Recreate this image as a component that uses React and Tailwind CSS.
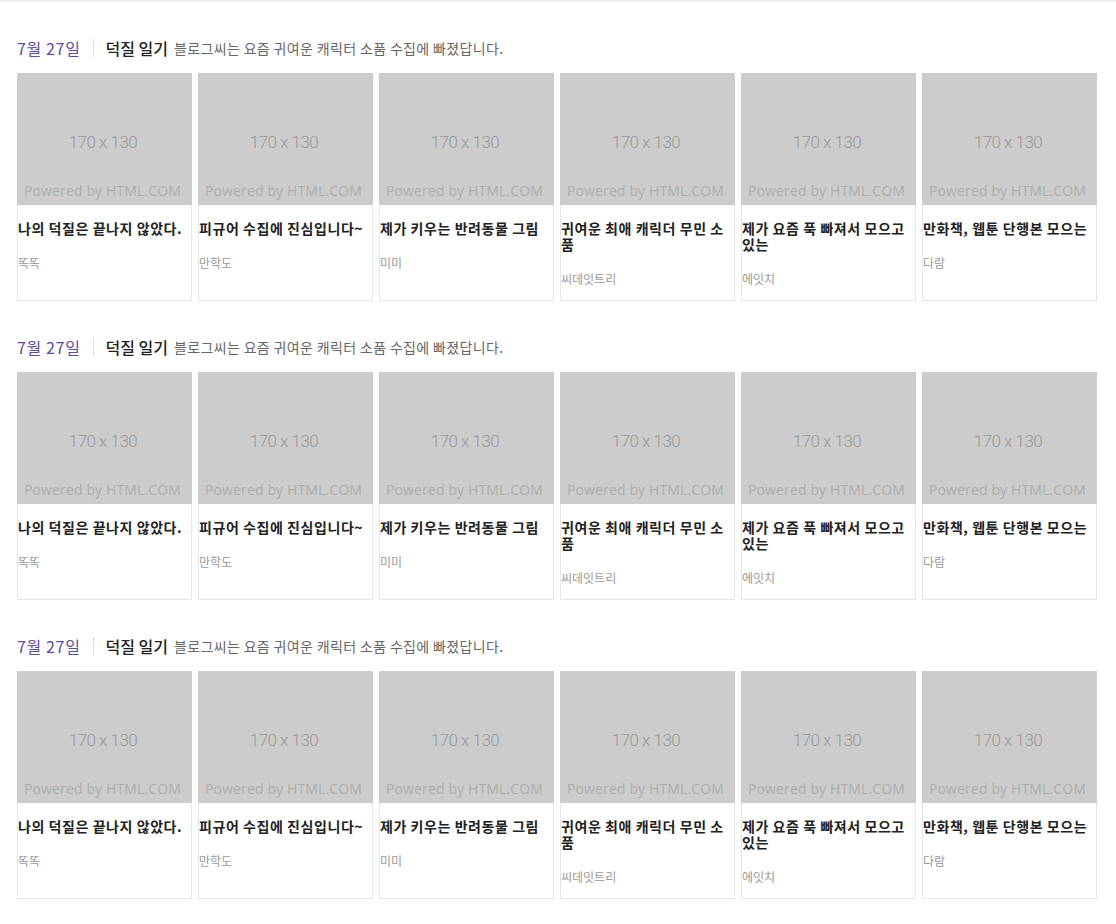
const posts = [
  { title: '나의 덕질은 끝나지 않았다.', author: '똑똑' },
  { title: '피규어 수집에 진심입니다~', author: '만학도' },
  { title: '제가 키우는 반려동물 그림', author: '미미' },
  { title: '귀여운 최애 캐릭더 무민 소품', author: '씨데잇트리' },
  { title: '제가 요즘 푹 빠져서 모으고 있는', author: '에잇치' },
  { title: '만화책, 웹툰 단행본 모으는', author: '다람' },
];

const kr = { fontFamily: '"Noto Sans CJK KR", "Noto Sans", sans-serif' };

function Placeholder() {
  return (
    <div className="h-[132px] w-full bg-[#cccccc] flex flex-col items-center">
      <span
        className="mt-[58px] -ml-[3px] text-[17px] leading-[22px] text-[#999999] tracking-[-0.03em]"
        style={{ fontFamily: 'Roboto, sans-serif', fontWeight: 300 }}
      >
        170 x 130
      </span>
      <span
        className="mt-[29px] -ml-[4px] text-[14px] leading-[18px] text-[#aeaeae] tracking-[0.01em]"
        style={{ fontFamily: '"Open Sans", sans-serif' }}
      >
        Powered by HTML.COM
      </span>
    </div>
  );
}

function Card({ post }) {
  return (
    <div className="w-[175px] h-[228px] border border-[#e6e6e6] bg-white flex flex-col">
      <div className="-mx-px -mt-px">
        <Placeholder />
      </div>
      <div className="pt-[15px]">
        <p className="text-[14px] leading-4 font-bold text-[#222] tracking-[0.04em]">
          {post.title}
        </p>
        <p className="mt-[19px] text-[12px] leading-4 text-[#999]">{post.author}</p>
      </div>
    </div>
  );
}

function Section() {
  return (
    <section>
      <div className="flex items-center h-5 pl-[17px]">
        <span className="text-[16px] text-[#5e4c99] tracking-[0.04em]">7월 27일</span>
        <span className="mx-[12px] h-[18px] w-px bg-[#dddddd]" />
        <span className="text-[16px] font-medium text-[#222]">덕질 일기</span>
        <span className="ml-[6px] text-[14px] text-[#666] tracking-[0.025em]">
          블로그씨는 요즘 귀여운 캐릭터 소품 수집에 빠졌답니다.
        </span>
      </div>
      <div className="mt-[15px] flex gap-[6px] pl-[17px]">
        {posts.map((p, i) => (
          <Card key={i} post={p} />
        ))}
      </div>
    </section>
  );
}

export default function App() {
  return (
    <div className="min-h-[924px] w-[1116px] bg-white" style={kr}>
      <div className="h-[4px] bg-gradient-to-b from-[#ebebeb] to-white" />
      <div className="pt-[34px] flex flex-col gap-[36px]">
        <Section />
        <Section />
        <Section />
      </div>
    </div>
  );
}
